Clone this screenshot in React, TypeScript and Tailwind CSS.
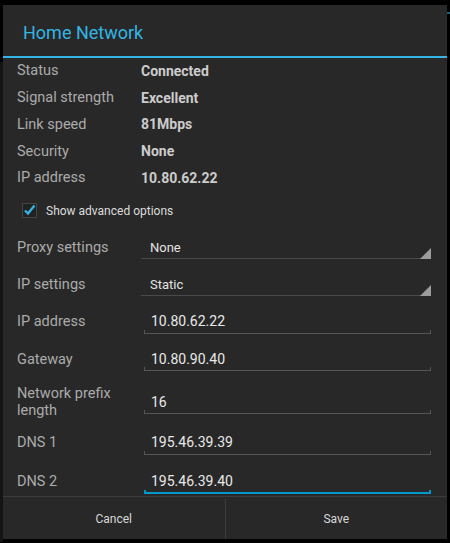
import React from "react";

const Info = ({ label, value }: { label: string; value: string }) => (
  <div className="flex h-[26.7px] items-center pl-[14px]">
    <div className="w-[124px] text-[14.5px] text-[#ababab]">{label}</div>
    <div className="text-[14px] font-bold text-[#cccccc]">{value}</div>
  </div>
);

const Spinner = ({ value }: { value: string }) => (
  <div className="relative flex h-[22px] w-[290px] items-center">
    <span className="pl-[9px] text-[13px] text-[#e2e2e2]">{value}</span>
    <div className="absolute bottom-[0px] left-0 h-[1px] w-[281px] bg-[#4a4a4a]" />
    <svg className="absolute bottom-0 right-0" width="11" height="11" viewBox="0 0 11 11">
      <polygon points="11,0 11,11 0,11" fill="#9c9c9c" />
    </svg>
  </div>
);

const Edit = ({ value, active }: { value: string; active?: boolean }) => {
  const c = active ? "bg-[#0099cc]" : "bg-[#565656]";
  return (
    <div className="relative ml-[3px] flex h-[24px] w-[287px] items-center">
      <span className="pl-[7px] text-[14px] text-[#e8e8e8]">{value}</span>
      <div className={`absolute bottom-0 left-0 w-full ${active ? "h-[2px]" : "h-[1px]"} ${c}`} />
      <div className={`absolute bottom-0 left-0 h-[4px] ${active ? "w-[2px]" : "w-[1px]"} ${c}`} />
      <div className={`absolute bottom-0 right-0 h-[4px] ${active ? "w-[2px]" : "w-[1px]"} ${c}`} />
    </div>
  );
};

const Label = ({ children }: { children: React.ReactNode }) => (
  <div className="w-[124px] text-[14.5px] leading-[17px] text-[#ababab]">{children}</div>
);

export default function App() {
  return (
    <div
      className="relative h-[543px] w-[450px] overflow-hidden bg-black pl-[3px] pt-[5px]"
      style={{ fontFamily: "Roboto, 'Liberation Sans', sans-serif" }}
    >
      <div className="absolute right-0 top-[12px] h-[2px] w-[3px] bg-[#1d5f78]" />
      <div className="absolute left-0 top-[62px] h-[480px] w-[3px] bg-[#141414]" />
      <div className="flex h-[534px] w-[444px] flex-col bg-[#282828]">
        <div className="flex h-[51px] items-center pl-[20px] pt-[3px]">
          <span className="text-[18px] text-[#33b5e5]">Home Network</span>
        </div>
        <div className="h-[2px] bg-[#33b5e5]" />
        <Info label="Status" value="Connected" />
        <Info label="Signal strength" value="Excellent" />
        <Info label="Link speed" value="81Mbps" />
        <Info label="Security" value="None" />
        <Info label="IP address" value="10.80.62.22" />
        <div className="flex h-[38px] items-center pl-[19px] pt-[1px]">
          <svg width="15" height="15" viewBox="0 0 15 15">
            <rect x="0.5" y="0.5" width="14" height="14" fill="#222" stroke="#444" />
            <path d="M3 7.5 L6 10.5 L12.5 2.5" fill="none" stroke="#33b5e5" strokeWidth="2.4" />
          </svg>
          <span className="pl-[9px] text-[12px] text-[#dcdcdc]">Show advanced options</span>
        </div>
        <div className="flex h-[37px] items-center pl-[14px]">
          <Label>Proxy settings</Label>
          <Spinner value="None" />
        </div>
        <div className="flex h-[37px] items-center pl-[14px]">
          <Label>IP settings</Label>
          <Spinner value="Static" />
        </div>
        <div className="flex h-[37px] items-center pl-[14px]">
          <Label>IP address</Label>
          <Edit value="10.80.62.22" />
        </div>
        <div className="flex h-[38px] items-center pl-[14px]">
          <Label>Gateway</Label>
          <Edit value="10.80.90.40" />
        </div>
        <div className="flex h-[48px] items-center pl-[14px]">
          <Label>
            Network prefix
            <br />
            length
          </Label>
          <Edit value="16" />
        </div>
        <div className="flex h-[33px] items-center pl-[14px]">
          <Label>DNS 1</Label>
          <Edit value="195.46.39.39" />
        </div>
        <div className="flex h-[36.5px] items-end pb-[2px] pl-[14px]">
          <div className="flex h-[24px] items-center">
            <Label>DNS 2</Label>
          </div>
          <Edit value="195.46.39.40" active />
        </div>
        <div className="h-[1px] bg-[#3c3c3c]" />
        <div className="flex flex-1 pt-[2px]">
          <div className="flex flex-1 items-center justify-center text-[12px] text-[#d8d8d8]">Cancel</div>
          <div className="w-[1px] bg-[#3c3c3c]" />
          <div className="flex flex-1 items-center justify-center text-[12px] text-[#d8d8d8]">Save</div>
        </div>
      </div>
    </div>
  );
}
